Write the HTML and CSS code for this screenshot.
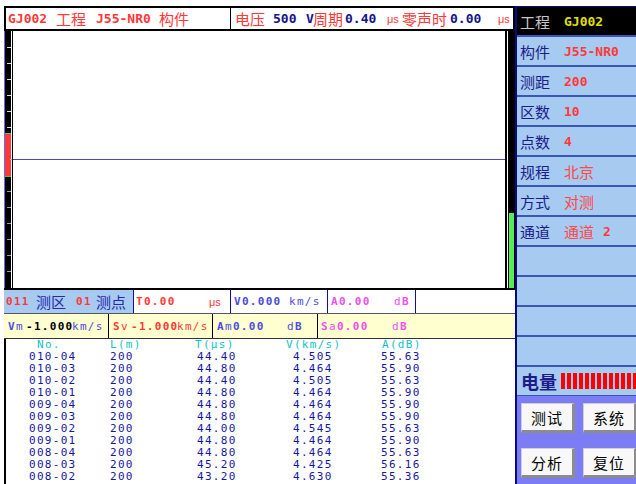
FILE: index.html
```html
<!DOCTYPE html>
<html lang="zh">
<head>
<meta charset="utf-8">
<title>GJ002</title>
<link rel="stylesheet" href="styles.css">
</head>
<body>
<div class="screen">
  <div class="main">
    <div class="topbar">
      <div class="tcell tcell1">
        <span class="f w48 num red">GJ002</span><span class="f w40 cjk red">工程</span><span class="f w63 num red">J55-NR0</span><span class="f cjk red">构件</span>
      </div>
      <div class="tcell tcell2">
        <span class="f w38 cjk red">电压</span><span class="f w33 num navy">500</span><span class="f w7 num navy">V</span><span class="f w32 cjk red">周期</span><span class="f w42 num navy">0.40</span><span class="f w15 us red">μs</span><span class="f w48 cjk red">零声时</span><span class="f w48 num navy">0.00</span><span class="f us red">μs</span>
      </div>
    </div>

    <div class="scope">
      <div class="scale">
        <svg width="8" height="257" viewBox="0 0 8 257">
          <rect x="0" y="0" width="1" height="257" fill="#6a6aee"/>
          <rect x="1" y="0" width="6" height="257" fill="#000"/>
          <rect x="7" y="0" width="1" height="257" fill="#fff"/>
          <g fill="#dcdcdc">
            <rect x="3" y="16" width="4" height="1"/>
            <rect x="3" y="32" width="4" height="1"/>
            <rect x="3" y="48" width="4" height="1"/>
            <rect x="3" y="64" width="4" height="1"/>
            <rect x="3" y="80" width="4" height="1"/>
            <rect x="3" y="96" width="4" height="1"/>
          </g>
          <g fill="#9a9a9a">
            <rect x="3" y="160" width="4" height="1"/>
            <rect x="3" y="176" width="4" height="1"/>
            <rect x="3" y="192" width="4" height="1"/>
            <rect x="3" y="208" width="4" height="1"/>
            <rect x="3" y="224" width="4" height="1"/>
            <rect x="3" y="240" width="4" height="1"/>
          </g>
          <rect x="1" y="102" width="6" height="44" fill="#ff3838"/>
          <rect x="1" y="102" width="6" height="1" fill="#3ccc3c"/>
          <rect x="1" y="145" width="6" height="1" fill="#3ccc3c"/>
          <rect x="6" y="128" width="2" height="1" fill="#b8d040"/>
        </svg>
      </div>
      <div class="plot">
        <svg width="492" height="257" viewBox="0 0 492 257">
          <rect x="0" y="128" width="492" height="1" fill="#4646cc"/>
        </svg>
      </div>
      <div class="gapcol"></div>
      <div class="level"><div class="level-fill"></div></div>
    </div>

    <div class="info1">
      <div class="icell ia">
        <span class="f w30 sm b red">011</span><span class="f w40 cjk blue">测区</span><span class="f w20 sm b red">01</span><span class="f cjk blue">测点</span>
      </div>
      <div class="icell ib">
        <span class="f w73 sm b red">T0.00</span><span class="f us red">μs</span>
      </div>
      <div class="icell ic">
        <span class="f w55 sm b violet">V0.000</span><span class="f sm violet">km/s</span>
      </div>
      <div class="icell id">
        <span class="f w63 sm b pink">A0.00</span><span class="f sm pink">d<b>B</b></span>
      </div>
      <div class="icell ie"></div>
    </div>

    <div class="info2">
      <div class="jcell ja">
        <span class="f w18 sm violet"><b>V</b>m</span><span class="f w46 sm b black">-1.000</span><span class="f sm violet">km/s</span>
      </div>
      <div class="jcell jb">
        <span class="f w18 sm red"><b>S</b>v</span><span class="f w46 sm b red">-1.000</span><span class="f sm red">km/s</span>
      </div>
      <div class="jcell jc">
        <span class="f w70 sm violet"><b>A</b>m<b>0.00</b></span><span class="f sm violet">d<b>B</b></span>
      </div>
      <div class="jcell jd">
        <span class="f w71 sm pink"><b>S</b>a<b>0.00</b></span><span class="f sm pink">d<b>B</b></span>
      </div>
    </div>

    <div class="table">
      <span class="th h1">No.</span><span class="th">L(m)</span><span class="th h3">T(μs)</span><span class="th h4">V(km/s)</span><span class="th h5">A(dB)</span>
      <span>010-04</span><span>200</span><span>44.40</span><span>4.505</span><span>55.63</span>
      <span>010-03</span><span>200</span><span>44.80</span><span>4.464</span><span>55.90</span>
      <span>010-02</span><span>200</span><span>44.40</span><span>4.505</span><span>55.63</span>
      <span>010-01</span><span>200</span><span>44.80</span><span>4.464</span><span>55.90</span>
      <span>009-04</span><span>200</span><span>44.80</span><span>4.464</span><span>55.90</span>
      <span>009-03</span><span>200</span><span>44.80</span><span>4.464</span><span>55.90</span>
      <span>009-02</span><span>200</span><span>44.00</span><span>4.545</span><span>55.63</span>
      <span>009-01</span><span>200</span><span>44.80</span><span>4.464</span><span>55.90</span>
      <span>008-04</span><span>200</span><span>44.80</span><span>4.464</span><span>55.63</span>
      <span>008-03</span><span>200</span><span>45.20</span><span>4.425</span><span>56.16</span>
      <span>008-02</span><span>200</span><span>43.20</span><span>4.630</span><span>55.36</span>
    </div>
  </div>

  <div class="side">
    <div class="srow dark"><span class="slabel">工程</span><span class="sval">GJ002</span></div>
    <div class="srow"><span class="slabel">构件</span><span class="sval">J55-NR0</span></div>
    <div class="srow"><span class="slabel">测距</span><span class="sval">200</span></div>
    <div class="srow"><span class="slabel">区数</span><span class="sval">10</span></div>
    <div class="srow"><span class="slabel">点数</span><span class="sval">4</span></div>
    <div class="srow"><span class="slabel">规程</span><span class="scjk">北京</span></div>
    <div class="srow"><span class="slabel">方式</span><span class="scjk">对测</span></div>
    <div class="srow"><span class="slabel">通道</span><span class="scjk">通道</span><span class="sval ch">2</span></div>
    <div class="srow"></div>
    <div class="srow"></div>
    <div class="srow"></div>
    <div class="srow"></div>
    <div class="battery"><span class="blabel">电量</span><span class="bars"></span></div>
    <div class="buttons">
      <div class="btn">测试</div>
      <div class="btn">系统</div>
      <div class="btn">分析</div>
      <div class="btn">复位</div>
    </div>
  </div>
</div>
</body>
</html>
```

FILE: styles.css
```css
* { box-sizing: border-box; margin: 0; padding: 0; }
html, body { width: 636px; height: 484px; overflow: hidden; background: #fff; }
body { font-family: "DejaVu Sans Mono", monospace; }

.screen { display: flex; height: 484px; padding: 6px 0 0 4px; }
.main { width: 511px; flex: none; display: flex; flex-direction: column; }

/* text helpers */
.f { display: inline-block; flex: none; white-space: nowrap; }
.cjk { font-family: "Noto Sans CJK SC", sans-serif; font-size: 15px; font-weight: 400; line-height: 18px; }
.num { font-family: "DejaVu Sans Mono", monospace; font-size: 13px; font-weight: bold; }
.sm { font-family: "DejaVu Sans Mono", monospace; font-size: 11px; letter-spacing: 1.3px; }
.us { font-family: "Liberation Sans", sans-serif; font-size: 11px; }
.b { font-weight: bold; }
.red { color: #ff3838; }
.navy { color: #14148c; }
.blue { color: #2828b0; }
.violet { color: #4c4ce0; }
.pink { color: #f050f0; }
.black { color: #000; }

.w7 { width: 7px; } .w15 { width: 15px; } .w18 { width: 18px; } .w20 { width: 20px; }
.w30 { width: 30px; } .w32 { width: 32px; } .w33 { width: 33px; } .w38 { width: 38px; }
.w40 { width: 40px; } .w42 { width: 42px; } .w46 { width: 46px; } .w48 { width: 48px; }
.w55 { width: 55px; } .w63 { width: 63px; } .w70 { width: 70px; } .w71 { width: 71px; }
.w73 { width: 73px; }

/* top bar */
.topbar { height: 25px; flex: none; display: flex; border: 2px solid #000; background: #fff; }
.tcell { display: flex; align-items: center; height: 100%; }
.tcell1 { width: 224px; padding-left: 2px; }
.tcell2 { flex: 1; border-left: 1px solid #000; padding-left: 4px; }

/* scope */
.scope { height: 259px; flex: none; display: flex; border-bottom: 2px solid #000; }
.scale { width: 8px; flex: none; }
.scale svg, .plot svg { display: block; }
.plot { width: 495px; flex: none; border-left: 1px solid #000; border-right: 2px solid #000; background: #fff; }
.gapcol { width: 1px; flex: none; background: #fff; }
.level { width: 7px; flex: none; background: #000; display: flex; align-items: flex-end; padding: 0 1px; }
.level-fill { width: 100%; height: 75px; background: #55ee55; }

/* info rows */
.info1 { height: 24px; flex: none; display: flex; border-bottom: 1px solid #55556e; background: #fff; }
.icell { display: flex; align-items: center; height: 100%; border-right: 1px solid #1010a0; }
.ia { width: 130px; background: #a6caf0; padding-left: 2px; }
.ib { width: 97px; padding-left: 2px; }
.ic { width: 97px; padding-left: 3px; }
.id { width: 88px; padding-left: 3px; }
.ie { flex: 1; border-right: none; }

.info2 { height: 25px; flex: none; display: flex; border-bottom: 1px solid #333; background: #ffffd0; }
.jcell { display: flex; align-items: center; height: 100%; border-right: 1px solid #000; padding-left: 4px; }
.ja { width: 105px; }
.jb { width: 104px; }
.jc { width: 105px; }
.jd { flex: 1; border-right: none; padding-left: 3px; }

/* table */
.table {
  flex: 1;
  display: grid;
  grid-template-columns: 81px 87px 96px 88px 1fr;
  grid-auto-rows: 12px;
  align-content: start;
  border-left: 2px solid #000;
  padding-left: 23px;
  background: #fff;
  font-family: "DejaVu Sans Mono", monospace;
  font-size: 11px;
  line-height: 12px;
  letter-spacing: 1.3px;
  color: #1616a4;
  white-space: nowrap;
}
.th { color: #10c4c8; }
.h1 { margin-left: 8px; }
.h3 { margin-left: -2px; }
.h4 { margin-left: -7px; }
.h5 { margin-left: 1px; }

/* side panel */
.side {
  width: 121px;
  flex: none;
  height: 478px;
  overflow: hidden;
  border-left: 2px solid #0a0a80;
  border-top: 1px solid #0a0a80;
  display: flex;
  flex-direction: column;
  background: #a6caf0;
}
.srow {
  height: 30px;
  flex: none;
  display: flex;
  align-items: center;
  padding-left: 3px;
  background: #a6caf0;
  border-bottom: 2px solid #3c54b4;
}
.srow.dark { background: #000; }
.slabel { width: 44px; flex: none; font-family: "Noto Sans CJK SC", sans-serif; font-size: 15px; color: #1c1c8c; }
.dark .slabel { color: #c8c8c8; }
.sval { font-family: "DejaVu Sans Mono", monospace; font-size: 13px; font-weight: bold; color: #ff3838; }
.dark .sval { color: #e0e000; }
.scjk { font-family: "Noto Sans CJK SC", sans-serif; font-size: 15px; color: #ff4848; }
.ch { margin-left: 9px; }

.battery {
  height: 29px;
  flex: none;
  display: flex;
  align-items: center;
  padding-left: 4px;
  border-bottom: 1px solid #3c54b4;
  background: #a6caf0;
}
.blabel { width: 40px; flex: none; font-family: "Noto Sans CJK SC", sans-serif; font-size: 18px; font-weight: bold; color: #1c1c8c; }
.bars {
  width: 80px;
  height: 16px;
  flex: none;
  background: repeating-linear-gradient(90deg, #ff0000 0 4px, transparent 4px 6px);
}

.buttons {
  flex: 1;
  background: #7c7cf4;
  display: grid;
  grid-template-columns: 54px 54px;
  grid-auto-rows: 30px;
  column-gap: 8px;
  row-gap: 15px;
  padding: 7px 0 0 4px;
}
.btn {
  background: #f8f8f8;
  border-top: 1px solid #d0d0d0;
  border-left: 1px solid #d0d0d0;
  border-right: 3px solid #8c8c8c;
  border-bottom: 3px solid #8c8c8c;
  display: flex;
  align-items: center;
  justify-content: center;
  font-family: "Noto Sans CJK SC", sans-serif;
  font-size: 15px;
  letter-spacing: 1px;
  color: #000;
}
```
